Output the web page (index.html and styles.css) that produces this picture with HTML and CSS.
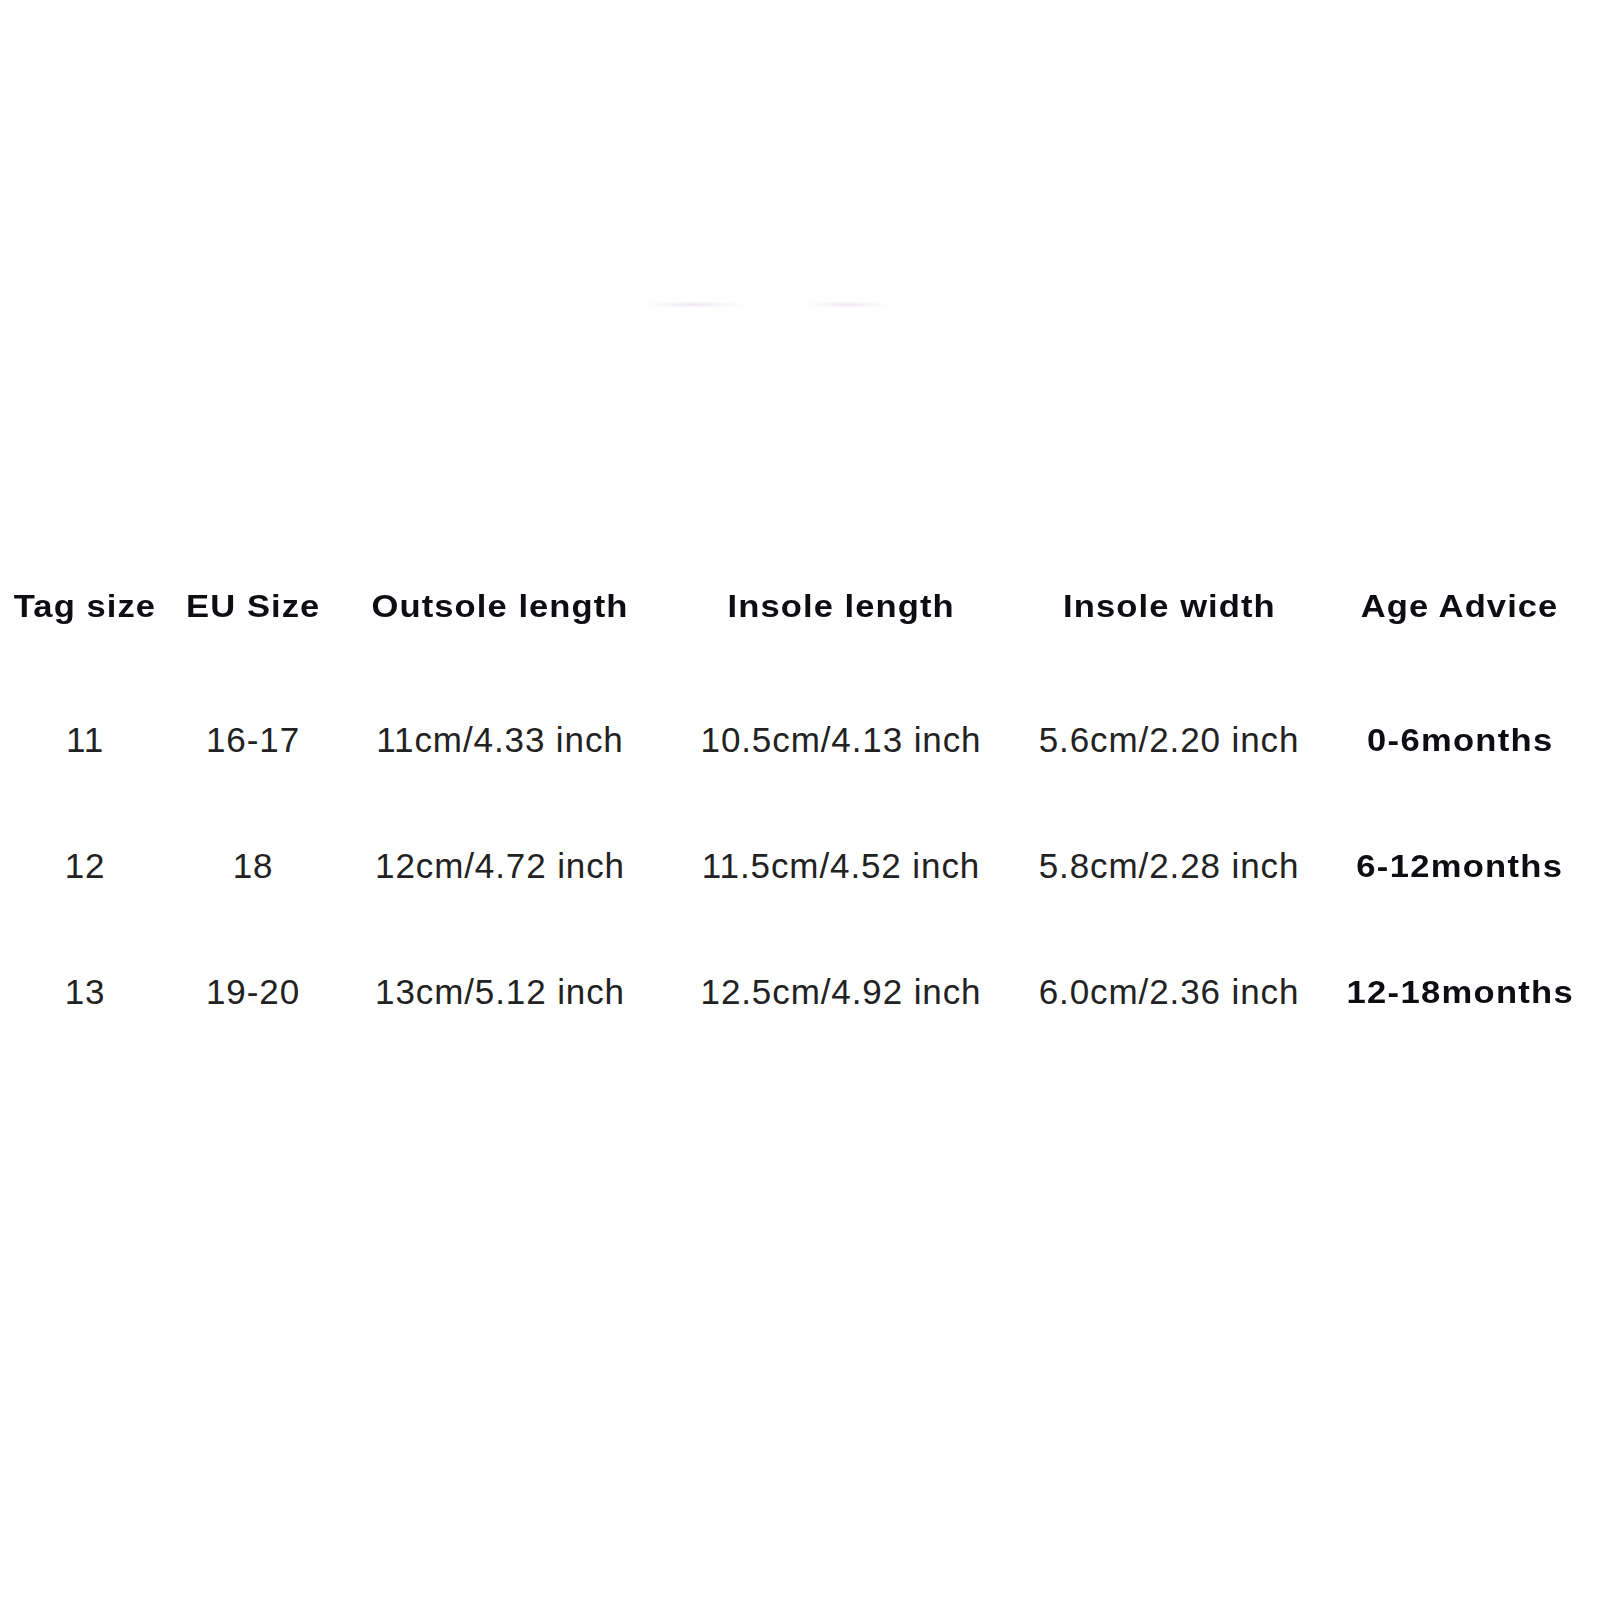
FILE: index.html
```html
<!DOCTYPE html>
<html lang="en">
<head>
<meta charset="utf-8">
<title>Size Chart</title>
<link rel="stylesheet" href="styles.css">
</head>
<body>
<main class="page">
  <div class="smudges">
    <span class="smudge smudge-a"></span>
    <span class="smudge smudge-b"></span>
  </div>
  <section class="chart">
    <div class="row head">
      <div class="cell">Tag size</div>
      <div class="cell">EU Size</div>
      <div class="cell">Outsole length</div>
      <div class="cell">Insole length</div>
      <div class="cell">Insole width</div>
      <div class="cell">Age Advice</div>
    </div>
    <div class="row">
      <div class="cell">11</div>
      <div class="cell">16-17</div>
      <div class="cell">11cm/4.33 inch</div>
      <div class="cell">10.5cm/4.13 inch</div>
      <div class="cell">5.6cm/2.20 inch</div>
      <div class="cell age">0-6months</div>
    </div>
    <div class="row">
      <div class="cell">12</div>
      <div class="cell">18</div>
      <div class="cell">12cm/4.72 inch</div>
      <div class="cell">11.5cm/4.52 inch</div>
      <div class="cell">5.8cm/2.28 inch</div>
      <div class="cell age">6-12months</div>
    </div>
    <div class="row">
      <div class="cell">13</div>
      <div class="cell">19-20</div>
      <div class="cell">13cm/5.12 inch</div>
      <div class="cell">12.5cm/4.92 inch</div>
      <div class="cell">6.0cm/2.36 inch</div>
      <div class="cell age">12-18months</div>
    </div>
  </section>
</main>
</body>
</html>
```

FILE: styles.css
```css
html, body {
  margin: 0;
  padding: 0;
  background: #ffffff;
}

.page {
  width: 1600px;
  height: 1600px;
  overflow: hidden;
  font-family: "Liberation Sans", Arial, sans-serif;
  color: #1c1c1c;
}

.smudges {
  display: flex;
  gap: 61px;
  height: 4px;
  margin-top: 303px;
  padding-left: 643px;
}

.smudge {
  display: block;
  height: 3px;
  border-radius: 2px;
  background: linear-gradient(90deg, rgba(235, 220, 240, 0), rgba(220, 198, 228, 0.5) 50%, rgba(235, 220, 240, 0));
  filter: blur(1px);
}

.smudge-a { width: 102px; }
.smudge-b { width: 82px; }

.chart {
  margin-top: 236px;
}

.row {
  display: grid;
  grid-template-columns: 170px 166px 328px 354px 302px 280px;
  height: 126px;
  align-items: center;
  justify-items: center;
}

.row.head {
  margin-bottom: 8px;
}

.cell {
  font-size: 35px;
  line-height: 40px;
  letter-spacing: 0.9px;
  white-space: nowrap;
  color: #222222;
}

.head .cell,
.cell.age {
  font-size: 32px;
  font-weight: 700;
  letter-spacing: 1px;
  color: #0d0d12;
  transform: scaleX(1.08);
}

.cell.age {
  letter-spacing: 1.2px;
}
```
